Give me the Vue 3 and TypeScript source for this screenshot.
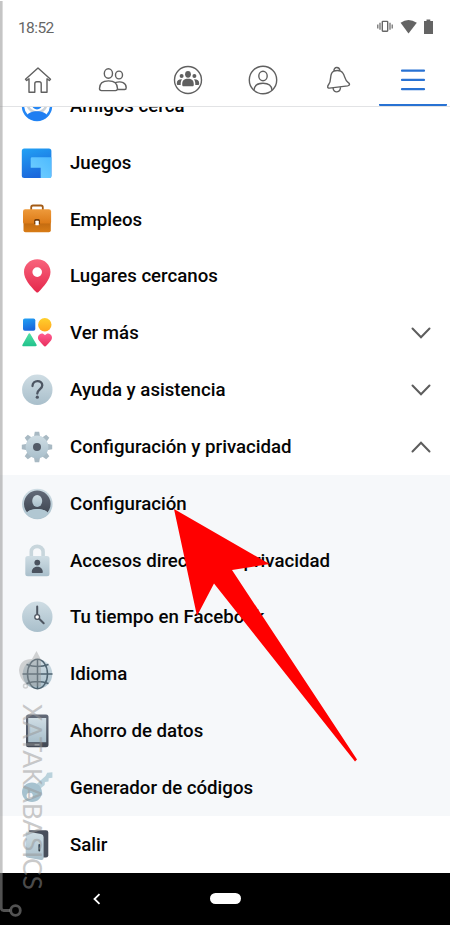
<script setup lang="ts">
import { computed } from 'vue'

interface MenuItem {
  icon: string
  label: string
  chevron?: 'down' | 'up'
  sub?: boolean
}

const items: MenuItem[] = [
  { icon: 'nearby', label: 'Amigos cerca' },
  { icon: 'games', label: 'Juegos' },
  { icon: 'jobs', label: 'Empleos' },
  { icon: 'pin', label: 'Lugares cercanos' },
  { icon: 'more', label: 'Ver más', chevron: 'down' },
  { icon: 'help', label: 'Ayuda y asistencia', chevron: 'down' },
  { icon: 'gear', label: 'Configuración y privacidad', chevron: 'up' },
  { icon: 'user', label: 'Configuración', sub: true },
  { icon: 'lock', label: 'Accesos directos de privacidad', sub: true },
  { icon: 'clock', label: 'Tu tiempo en Facebook', sub: true },
  { icon: 'globe', label: 'Idioma', sub: true },
  { icon: 'phone', label: 'Ahorro de datos', sub: true },
  { icon: 'key', label: 'Generador de códigos', sub: true },
  { icon: 'door', label: 'Salir' },
]

const teeth = computed(() => Array.from({ length: 8 }, (_, i) => `rotate(${i * 45} 20 20)`))
</script>

<template>
  <div class="screen">
    <svg class="defs" width="0" height="0">
      <defs>
        <linearGradient id="steel" x1="0" y1="0" x2="0" y2="1"><stop offset="0" stop-color="#cfdde4" /><stop offset="1" stop-color="#a9bfcb" /></linearGradient>
        <linearGradient id="blue" x1="0" y1="0" x2="0.3" y2="1"><stop offset="0" stop-color="#22a2f5" /><stop offset="1" stop-color="#1b68dc" /></linearGradient>
        <linearGradient id="sky" x1="1" y1="0" x2="0" y2="1"><stop offset="0" stop-color="#4dbaff" /><stop offset="1" stop-color="#74d0ff" /></linearGradient>
        <linearGradient id="tan" x1="0" y1="0" x2="0" y2="1"><stop offset="0" stop-color="#ee9a3b" /><stop offset="1" stop-color="#dc7a17" /></linearGradient>
        <linearGradient id="brown" x1="0" y1="0" x2="0" y2="1"><stop offset="0" stop-color="#b15e0c" /><stop offset="1" stop-color="#d97c16" /></linearGradient>
        <linearGradient id="red" x1="0" y1="0" x2="0" y2="1"><stop offset="0" stop-color="#f8647c" /><stop offset="1" stop-color="#e5284c" /></linearGradient>
        <linearGradient id="yellow" x1="0" y1="0" x2="0" y2="1"><stop offset="0" stop-color="#ffd02c" /><stop offset="1" stop-color="#ffa51e" /></linearGradient>
        <linearGradient id="green" x1="0" y1="0" x2="0" y2="1"><stop offset="0" stop-color="#52dfa4" /><stop offset="1" stop-color="#20c28c" /></linearGradient>
        <linearGradient id="pink" x1="0" y1="0" x2="0" y2="1"><stop offset="0" stop-color="#ff5c92" /><stop offset="1" stop-color="#e82f5c" /></linearGradient>
        <linearGradient id="dark" x1="0" y1="0" x2="0" y2="1"><stop offset="0" stop-color="#626a78" /><stop offset="1" stop-color="#414854" /></linearGradient>
      </defs>
    </svg>

    <header class="status">
      <span class="time">18:52</span>
      <svg class="status-icons" width="60" height="20" viewBox="0 0 60 20">
        <g fill="none" stroke="#666" stroke-width="1.2">
          <rect x="7.3" y="4.4" width="5.4" height="9.8" rx=".6" stroke-width="1.4" />
          <path d="M5 5.8v7M2.8 7.4v4M15 5.8v7M17.2 7.4v4" />
        </g>
        <path d="M25.6 5.8Q33.3 0.4 41.8 5.8L33.5 16.6Z" fill="#646464" />
        <path d="M49 4h2.5V2.4h3.8V4H58v13H49Z" fill="#646464" />
      </svg>
    </header>

    <nav class="tabs">
      <div class="tab">
        <svg viewBox="0 0 36 36" class="line"><path d="M5.5 17.2 18 6l12.5 11.2-1.2 1.3-2.3-1.7v13.4h-5.8v-8.4a2 2 0 0 0-2-2h-2.4a2 2 0 0 0-2 2v8.4H9V16.8l-2.3 1.7Z" /></svg>
      </div>
      <div class="tab">
        <svg viewBox="0 0 36 36" class="line"><ellipse cx="13.4" cy="11.5" rx="4.1" ry="4.7" /><ellipse cx="24" cy="13" rx="3.5" ry="3.9" /><path d="M4.5 26.6c0-5.5 3.2-7.7 9-7.7s9 2.2 9 7.7c0 1.3-.6 2-2 2h-14c-1.4 0-2-.7-2-2ZM20.2 20.7c6.3-2.2 11 .3 11 5 0 1.300-.4 1.800-1.600 1.800h-7.400" /></svg>
      </div>
      <div class="tab">
        <svg viewBox="0 0 36 36" class="line"><circle cx="18" cy="18" r="13.5" /><g fill="#606060" stroke="none"><ellipse cx="18" cy="12.3" rx="2.9" ry="3.4" /><circle cx="11.6" cy="13.9" r="2" /><circle cx="24.4" cy="13.9" r="2" /><path d="M12.2 22.4c0-4 2-5.6 5.8-5.6s5.8 1.6 5.8 5.6c0 1.3-.4 1.8-1.6 1.8h-8.4c-1.2 0-1.6-.5-1.6-1.8ZM12 17.3c-3.4-.1-5.2 1.3-5.2 4.1 0 1 .4 1.5 1.4 1.5h2.5c0-2.6.2-4 1.3-5.6ZM24 17.3c3.4-.1 5.2 1.3 5.2 4.1 0 1-.4 1.5-1.4 1.5h-2.5c0-2.6-.2-4-1.3-5.6Z" /></g></svg>
      </div>
      <div class="tab">
        <svg viewBox="0 0 36 36" class="line"><circle cx="18" cy="18" r="13.7" /><ellipse cx="18" cy="14" rx="4.2" ry="4.8" /><path d="M9 28.3c.3-5 3.3-7 9-7s8.7 2 9 7" /></svg>
      </div>
      <div class="tab">
        <svg viewBox="0 0 36 36" class="line"><path d="M13.9 9.2C8.6 11.5 12.2 18.3 8.8 22.3 7.2 24.3 7.2 26.4 9.5 26.1L27.7 23.900C30 23.500 30.200 21.600 28 20.300 23.700 17.700 25.500 11.300 20.600 9.200Q17.200 7.700 13.900 9.200ZM14 8.800c-.4-4 5.400-4.700 6 0M13.100 26c.2 5.400 7.400 5.200 7.400-1" /></svg>
      </div>
      <div class="tab active">
        <svg viewBox="0 0 36 36" class="burger"><path d="M7 8.7h22M7 17.9h22M7 27.2h22" /></svg>
      </div>
    </nav>

    <main class="list">
      <div v-for="item in items" :key="item.icon" class="row" :class="{ sub: item.sub }">
        <svg class="icon" viewBox="0 0 40 40">
          <g v-if="item.icon === 'nearby'"><circle cx="20" cy="20" r="14" fill="#fff" stroke="#2487f5" stroke-width="2.4" /><circle cx="20" cy="17" r="9.500" fill="none" stroke="#c9d2da" stroke-width="2.500" /><circle cx="20" cy="18.500" r="5" fill="#2487f5" /><path d="M9.500 30c2-6.500 19-6.500 21 0-5 6-16 6-21 0Z" fill="#1f7ef2" /></g>
          <g v-else-if="item.icon === 'games'"><rect x="4.8" y="5.5" width="29.6" height="29.5" rx="2.5" fill="url(#blue)" /><path d="M12 14.300h22.400v19.200q0 1.500-1.500 1.500h-9.200V24.700H13.700v-9.100q0-1.300 1.300-1.300Z" fill="none" /><path d="M15 14.300h19.400v19.200q0 1.500-1.500 1.500h-9.200V24.700H13.700v-9.100q0-1.300 1.300-1.300Z" fill="url(#sky)" /></g>
          <g v-else-if="item.icon === 'jobs'"><path d="M14.200 10V7.300q0-1.800 1.800-1.800h8q1.800 0 1.800 1.800V10" fill="none" stroke="#a35b14" stroke-width="1.800" /><rect x="6.500" y="16" width="27.300" height="16.200" rx="2" fill="url(#brown)" /><path d="M6 11.500q0-2.200 2.200-2.200h23.700q2.200 0 2.200 2.200V22q0 1.500-1.500 1.500H7.500Q6 23.500 6 22Z" fill="url(#tan)" /><path d="M17.200 24v-3.500q0-1.500 1.500-1.500h2.700q1.500 0 1.500 1.500V24Z" fill="#703a08" /><rect x="18.400" y="20.700" width="3.400" height="4.600" rx=".6" fill="#fff" /></g>
          <g v-else-if="item.icon === 'pin'"><path fill-rule="evenodd" d="M20.300 3.200c7.400 0 13.200 5.500 13.200 12.700 0 7.300-6.700 14.500-12 20.100q-1.200 1.200-2.400 0C13.700 30.400 7 23.200 7 15.900 7 8.700 12.900 3.200 20.300 3.200Zm-.1 8.100a4.800 4.800 0 1 0 0 9.600 4.800 4.800 0 0 0 0-9.600Z" fill="url(#red)" /></g>
          <g v-else-if="item.icon === 'more'"><rect x="6" y="5.500" width="12.300" height="12.200" rx="1.800" fill="url(#blue)" /><circle cx="27.800" cy="11.800" r="6.700" fill="url(#yellow)" /><path d="M11.300 21.200q1.100-1.800 2.200 0l6 10.300q.9 1.800-1 1.800H6.600q-2 0-1-1.800Z" fill="url(#green)" /><path d="M28 33.500q-1 0-6-6c-3.300-4.400 2.300-10 6-5.300 3.700-4.700 9.300.9 6 5.300q-5 6-6 6Z" fill="url(#pink)" /></g>
          <g v-else-if="item.icon === 'help'"><circle cx="20.300" cy="19.700" r="15.200" fill="url(#steel)" /><path d="M15.500 16c.1-6.500 9.800-6.300 9.800-.8 0 4.200-5 4.200-5 8.400" fill="none" stroke="#4d5663" stroke-width="2.300" stroke-linecap="round" /><circle cx="20.300" cy="27.200" r="1.600" fill="#4d5663" /></g>
          <g v-else-if="item.icon === 'gear'"><path v-for="t in teeth" :key="t" :transform="t" d="M17.800 4.800h4.400l1 5.600h-6.400Z" fill="#a8b9c3" /><circle cx="20" cy="20" r="11.400" fill="url(#steel)" /><circle cx="20" cy="20" r="4" fill="#535b67" /></g>
          <g v-else-if="item.icon === 'user'"><circle cx="20.300" cy="20" r="15.300" fill="url(#steel)" /><path d="M10.200 28.500a13.300 13.300 0 1 1 20.200 0c-2.200-4.500-18-4.500-20.200 0Z" fill="url(#dark)" /><ellipse cx="20.200" cy="17" rx="5" ry="5.900" fill="url(#steel)" /><path d="M9.800 29.500c1-6 20-6 21 0-5 7-16 7-21 0Z" fill="#b1c7d2" /></g>
          <g v-else-if="item.icon === 'lock'"><path d="M14.300 17v-6.200c0-7.200 11.800-7.200 11.800 0V17" fill="none" stroke="#c8d6dc" stroke-width="3.600" /><rect x="8.300" y="15" width="24.200" height="20.200" rx="2.500" fill="url(#steel)" /><circle cx="20.300" cy="21.600" r="2.900" fill="#4a525e" /><path d="M14.800 31.300c-.2-7.300 11.200-7.300 11 0q0 .7-.7.700h-9.600q-.7 0-.7-.7Z" fill="#4a525e" /></g>
          <g v-else-if="item.icon === 'clock'"><circle cx="20.300" cy="19.800" r="15.200" fill="url(#steel)" /><path d="M20.200 9.500v10.300l6.500 6.500" fill="none" stroke="#4e5661" stroke-width="2" stroke-linecap="round" /><circle cx="20.200" cy="20" r="2.400" fill="#fff" stroke="#4e5661" stroke-width="1.300" /></g>
          <g v-else-if="item.icon === 'globe'"><circle cx="20.500" cy="20" r="14.800" fill="url(#steel)" /><g fill="none" stroke="#4e6370" stroke-width="1.500"><path d="M20.500 5v30M5.500 20h30M9.500 10.500q11 4 22 0M9.500 29.500q11-4 22 0" /><ellipse cx="20.500" cy="20" rx="10" ry="14.700" /></g></g>
          <g v-else-if="item.icon === 'phone'"><rect x="9" y="3.500" width="22.500" height="32.700" rx="2.500" fill="url(#dark)" /><rect x="11.200" y="7" width="18" height="24.200" fill="url(#steel)" /><rect x="17.500" y="33" width="5" height="1.500" rx=".5" fill="#9ba5ad" /></g>
          <g v-else-if="item.icon === 'key'"><path d="M19 16.500 28.500 8l1.700-3.200 5.200-.5v5.500l-3.700.4-.2 3.400-3.600.3-.2 3.200-3.900 3.200Z" fill="#bad2dc" /><path fill-rule="evenodd" d="M15 14.500c5.500 0 10 4.300 10 9.700 0 5.500-4.500 9.800-10 9.800S5 29.700 5 24.200s4.500-9.700 10-9.700Zm-2.300 10.200a3.100 3.100 0 1 0 0 6.200 3.100 3.100 0 0 0 0-6.200Z" fill="#a6c2cf" /></g>
          <g v-else><path d="M12 5.200h17q2.300 0 2.300 2.300v22.700q0 2.300-2.300 2.300H12Z" fill="#484f5c" /><path d="M10 6.500 24 9q2.600.5 2.600 3v21q0 2.300-2.600 1.900L10 32.500Q8.700 32 8.700 30.700V8q0-1.600 1.300-1.500Z" fill="url(#steel)" /><path d="M22.300 20v5.500" stroke="#343c45" stroke-width="1.800" stroke-linecap="round" /></g>
        </svg>
        <span class="label">{{ item.label }}</span>
        <svg v-if="item.chevron" class="chevron" :class="item.chevron" viewBox="0 0 20 12"><path d="M1.500 1.500 10 10.200 18.500 1.500" /></svg>
      </div>
    </main>

    <footer class="navbar">
      <svg class="back" viewBox="0 0 10 14"><path d="M7.500 2.200 2.500 7l5 4.800" /></svg>
      <span class="home"></span>
    </footer>

    <svg class="arrow" width="184" height="254" viewBox="0 0 184 254"><path d="M0 0 95.500 55 58 61 183 250.500 181 252.500 40 74.500 23 107Z" fill="#f00" /></svg>

    <svg class="mark-line" width="24" height="925" viewBox="0 0 24 925"><path d="M1.200 1V908q0 2.500 2.500 2.500H10" /><circle cx="15.500" cy="910.500" r="4.800" /></svg>
    <svg class="mark-logo" width="26" height="44" viewBox="0 0 26 44"><path d="M18.500 0 23 8.500v27H14Q2 32 1 19 2 8 14 8Z" /><circle cx="7.500" cy="35" r="2" class="ring" /></svg>
    <div class="mark-text">XATAKABASICS</div>
  </div>
</template>

<style>
body {
  margin: 0;
  background: #fff;
}
</style>

<style scoped>
.screen {
  position: relative;
  display: flex;
  flex-direction: column;
  width: 450px;
  height: 925px;
  overflow: hidden;
  background: #fff;
  font-family: Roboto, "Liberation Sans", sans-serif;
}
.defs {
  position: absolute;
}
.status {
  display: flex;
  justify-content: space-between;
  align-items: center;
  height: 54px;
  padding: 1px 15px 0 18px;
  box-sizing: border-box;
}
.time {
  color: #666;
  font-size: 15.5px;
  letter-spacing: -0.6px;
}
.status-icons {
  margin-top: -2px;
}
.tabs {
  display: flex;
  flex: none;
  height: 52.5px;
  border-bottom: 1px solid #e2e3e5;
  box-sizing: border-box;
}
.tab {
  display: flex;
  flex: none;
  width: 75px;
  align-items: center;
  justify-content: center;
  box-sizing: border-box;
}
.tab svg {
  width: 36px;
  height: 36px;
}
.line {
  fill: none;
  stroke: #606060;
  stroke-width: 1.4;
  stroke-linejoin: round;
}
.active {
  width: 68px;
  margin: 0 3px 0 3.5px;
  padding-top: 2px;
  border-bottom: 2px solid #2872d3;
  border-radius: 1px;
}
.burger {
  fill: none;
  stroke: #2872d3;
  stroke-width: 2.2;
  stroke-linecap: round;
}
.list {
  flex: 1;
  min-height: 0;
  overflow: hidden;
}
.row {
  display: flex;
  align-items: center;
  height: 56.84px;
  padding: 1px 19px 0 17px;
  gap: 13px;
  box-sizing: border-box;
}
.row:first-child {
  margin-top: -29.5px;
}
.sub {
  background: #f6f8fa;
}
.icon {
  flex: none;
  width: 40px;
  height: 40px;
}
.label {
  flex: 1;
  color: #050505;
  font-size: 18.65px;
  font-weight: 500;
  line-height: 24px;
  white-space: nowrap;
}
.chevron {
  width: 20px;
  height: 12px;
  fill: none;
  stroke: #5d5d5d;
  stroke-width: 2;
  stroke-linecap: round;
}
.up {
  transform: rotate(180deg);
}
.navbar {
  display: grid;
  grid-template-columns: 194px 62px 194px;
  align-items: center;
  flex: none;
  height: 52.5px;
  background: #000;
}
.back {
  width: 10px;
  height: 14px;
  justify-self: center;
  fill: none;
  stroke: #fff;
  stroke-width: 1.8;
}
.home {
  width: 31px;
  height: 11px;
  justify-self: center;
  border-radius: 6px;
  background: #fff;
}
.arrow {
  position: absolute;
  left: 174px;
  top: 509px;
}
.mark-line {
  position: absolute;
  left: 0;
  top: 0;
  fill: none;
  stroke: rgba(150, 150, 150, 0.55);
  stroke-width: 2.8;
}
.mark-logo {
  position: absolute;
  left: 18px;
  top: 651px;
  fill: rgba(150, 150, 150, 0.4);
}
.ring {
  fill: none;
  stroke: rgba(150, 150, 150, 0.4);
  stroke-width: 1.5;
}
.mark-text {
  position: absolute;
  left: 16.5px;
  top: 704px;
  color: rgba(150, 150, 150, 0.5);
  font-family: Lato, sans-serif;
  font-size: 26.5px;
  line-height: 32px;
  letter-spacing: -0.3px;
  writing-mode: vertical-rl;
}
</style>
